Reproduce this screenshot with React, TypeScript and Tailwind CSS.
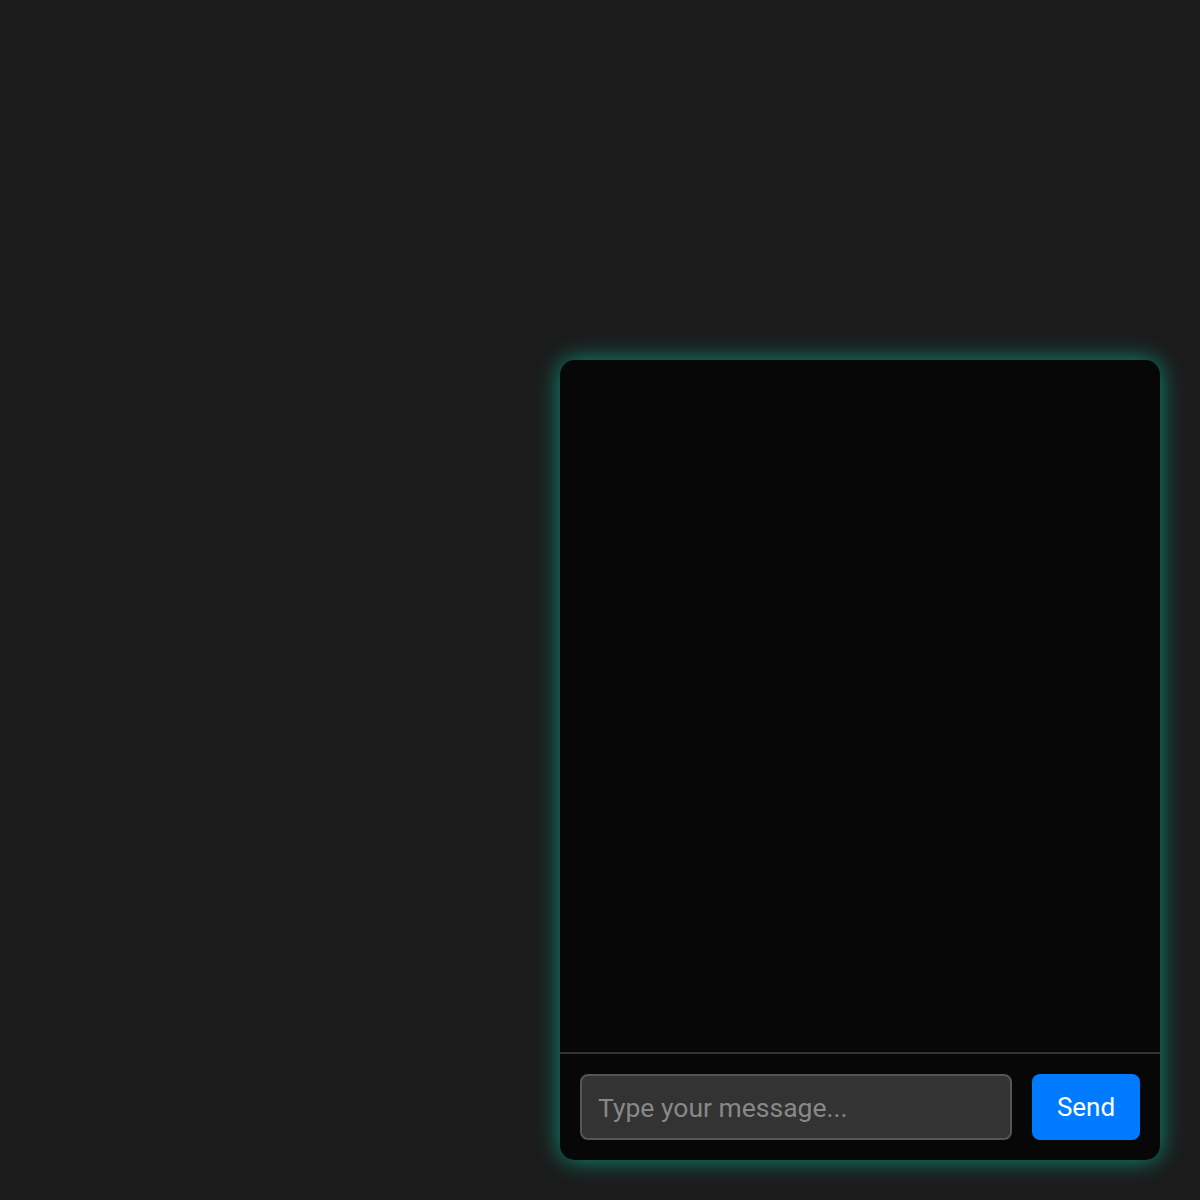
import React from "react";

export default function App() {
  return (
    <div
      className="w-full h-[1200px] bg-[#1b1b1b] flex items-end justify-end p-[40px]"
      style={{ fontFamily: "Roboto, 'Liberation Sans', sans-serif" }}
    >
      <div className="w-[600px] h-[800px] bg-[#070707] rounded-[15px] flex flex-col overflow-hidden shadow-[0_0_25px_rgba(0,240,200,0.55)]">
        <div className="flex-1" />
        <div className="border-t-2 border-[#333] flex items-center gap-[20px] p-[20px]">
          <input
            type="text"
            placeholder="Type your message..."
            className="flex-1 h-[66px] bg-[#333] border-2 border-[#555] rounded-[8px] px-[16px] text-[26.5px] text-white placeholder:text-[#888] outline-none"
          />
          <button className="w-[108px] h-[66px] bg-[#007bff] text-white text-[26px] rounded-[8px]">
            Send
          </button>
        </div>
      </div>
    </div>
  );
}
